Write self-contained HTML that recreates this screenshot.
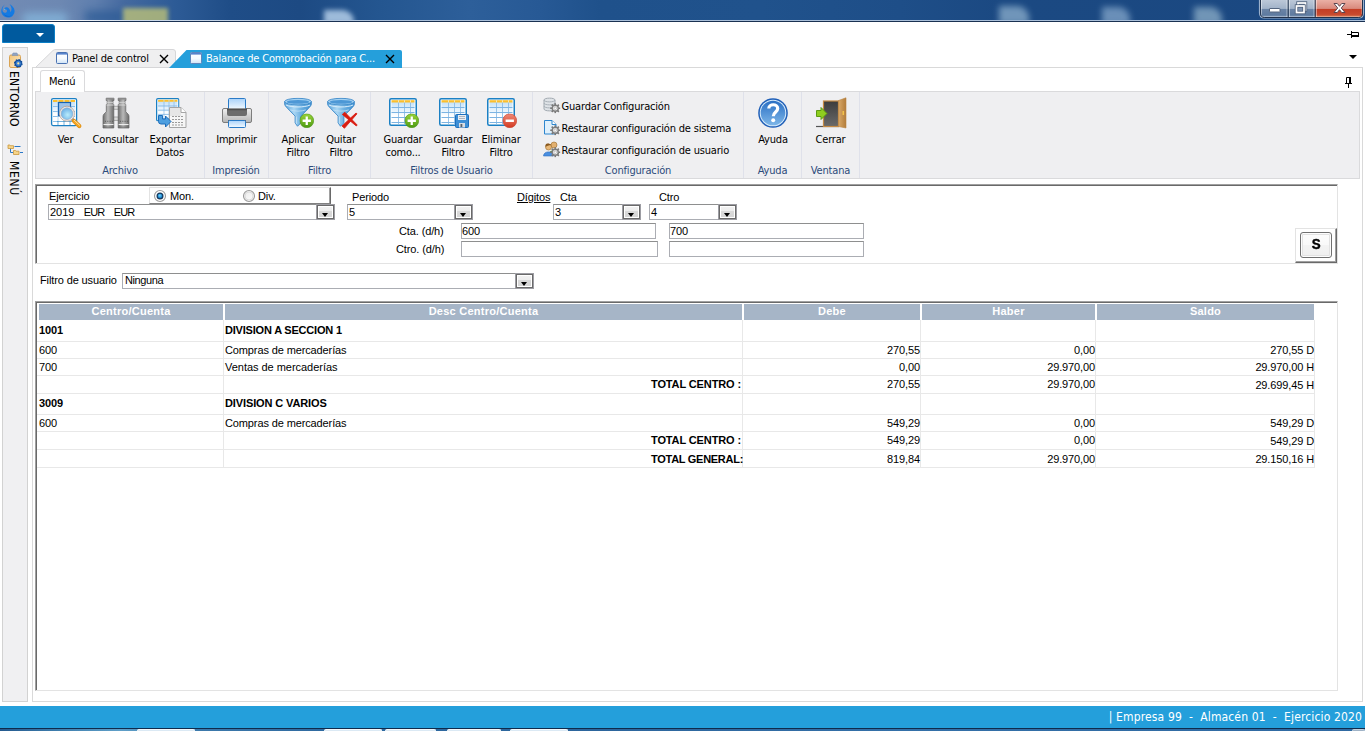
<!DOCTYPE html>
<html lang="es">
<head>
<meta charset="utf-8">
<title>Balance de Comprobación para Centros</title>
<style>
*{box-sizing:border-box;margin:0;padding:0}
html,body{width:1365px;height:731px;overflow:hidden;background:#fff}
body{position:relative;font-family:"Liberation Sans",sans-serif;font-size:11px;color:#000}
.abs{position:absolute}
.t{position:absolute;white-space:nowrap;line-height:13px}
.tah{font-family:"DejaVu Sans Condensed","Liberation Sans",sans-serif;font-size:11px;letter-spacing:-0.18px}
/* title bar */
#titlebar{left:0;top:0;width:1365px;height:20px;background:linear-gradient(90deg,#728bb4 0,#6d88b2 60px,#5f7fae 95px,#44699f 125px,#2d5b96 175px,#1f4d87 230px,#1d4a83 300px,#245690 380px,#2d5f9a 470px,#275995 540px,#1f518b 600px,#20528c 760px,#1e4e88 900px,#1b4982 1000px,#1b4881 1365px);overflow:hidden}
#titleline{left:0;top:21px;width:1365px;height:1px;background:#1a3152}
#titleline2{left:0;top:20px;width:1365px;height:1px;background:linear-gradient(90deg,#cfdcec 0,#ffffff 60px,#cfdcec 130px,#a9bfd9 400px,#a9bfd9 1365px)}
.blob{position:absolute;filter:blur(3px);opacity:.8}
/* main */
#bluebtn{left:2px;top:24px;width:53px;height:19px;background:#005a9e;border:1px solid #0c7fc6;border-radius:3px 3px 0 0}
#sidebar{left:2px;top:47px;width:26px;height:655px;background:#f0f0f2;border:1px solid #d2d2d2}
#content{left:32px;top:67px;width:1331px;height:635px;background:#fff;border:1px solid #d9d9d9}
#ribbon{left:35px;top:91px;width:1325px;height:88px;background:#efeff1;border:1px solid #dadadc}
.gsep{position:absolute;top:92px;width:1px;height:86px;background:#dfe1ea}
.glabel{color:#2b4a7a}
#status{left:0;top:706px;width:1365px;height:22px;background:#249fdb}
#taskstrip{left:0;top:728px;width:1365px;height:3px;background:linear-gradient(90deg,#24598e 0,#3f7fae 60px,#5f9fc8 120px,#3c79ab 200px,#2f6aa0 320px,#2c659c 600px,#3470a8 900px,#2f69a1 1365px);overflow:hidden}
#taskstrip i{position:absolute;top:1px;height:3px;background:#dbe9f4;border:1px solid #f4f9fc;border-bottom:0;border-radius:2px 2px 0 0}
/* form */
#panel{left:35px;top:184px;width:1303px;height:80px;border:1px solid;border-color:#a0a0a0 #e3e3e3 #e3e3e3 #a0a0a0;box-shadow:inset 1px 1px 0 #696969;background:#fff}
.combo{position:absolute;height:16px;border:1px solid #abadb3;border-top-color:#8e8f8f;background:#fff}
.combo .dd{position:absolute;right:0;top:0;width:17px;height:14px;border:1px solid #6a6a6a;background:#fff;box-shadow:0 0 0 1px #9d9da3}
.combo .dd:before{content:"";position:absolute;left:1px;top:1px;width:13px;height:10px;background:linear-gradient(#f1f1f1 0,#ededed 40%,#dadada 41%,#d6d6d6 100%)}
.combo .dd:after{content:"";position:absolute;left:4px;top:7px;border:3.5px solid transparent;border-top:4px solid #000;border-bottom:0}
.combo span{position:absolute;left:1px;top:1px;line-height:13px;white-space:nowrap}
.inp{position:absolute;height:16px;border:1px solid #abadb3;border-top-color:#8e8f8f;background:#fff;line-height:13px;padding-left:0;padding-top:1px}
/* grid */
#grid{left:35px;top:301px;width:1303px;height:390px;border:1px solid;border-color:#a0a0a0 #e3e3e3 #e3e3e3 #a0a0a0;box-shadow:inset 1px 1px 0 #696969;background:#fff}
.hd{position:absolute;top:304px;height:16px;background:#a6b5c7;color:#fff;font-weight:bold;text-align:center;line-height:15px;font-size:11px;letter-spacing:.25px}
.hl{position:absolute;left:37px;width:1278px;height:1px;background:#e8e8e8}
.vl{position:absolute;top:320px;width:1px;height:147px;background:#e8e8e8}
.c{position:absolute;white-space:nowrap;line-height:13px}
.ms{letter-spacing:-.12px}
.r{text-align:right}
.b{font-weight:bold}
</style>
</head>
<body>
<div id="titlebar" class="abs">
  <div class="blob" style="left:22px;top:13px;width:46px;height:12px;background:#86b8de;border-radius:8px;filter:blur(4px)"></div>
  <div class="blob" style="left:85px;top:11px;width:40px;height:12px;background:#2a5994;filter:blur(5px)"></div>
  <div class="blob" style="left:123px;top:8px;width:45px;height:16px;background:#bcc178;filter:blur(2px)"></div>
  <div class="blob" style="left:324px;top:10px;width:30px;height:14px;background:#bdd6ef;border-radius:0 12px 0 0;filter:blur(2.500px)"></div>
  <div class="blob" style="left:999px;top:6px;width:30px;height:18px;background:#86a9c8;border-radius:0 12px 0 0;filter:blur(3px)"></div>
  <div class="blob" style="left:1102px;top:7px;width:28px;height:18px;background:#7ea1c6;border-radius:0 12px 0 0;filter:blur(3px)"></div>
  <div class="blob" style="left:1194px;top:7px;width:28px;height:18px;background:#87a9c4;border-radius:0 12px 0 0;filter:blur(3px)"></div>
</div>
<div id="titleline2" class="abs"></div>
<div id="titleline" class="abs"></div>
<div id="bluebtn" class="abs"></div>
<div id="sidebar" class="abs"></div>
<div id="content" class="abs"></div>
<div id="ribbon" class="abs"></div>

<!-- window caption buttons -->
<svg class="abs" style="left:1258px;top:0" width="107" height="20" viewBox="0 0 107 20">
  <defs>
    <linearGradient id="cbG" x1="0" y1="0" x2="0" y2="1"><stop offset="0" stop-color="#bcc8d8"/><stop offset=".47" stop-color="#a2b3c9"/><stop offset=".5" stop-color="#6b84a6"/><stop offset=".82" stop-color="#5f7ba0"/><stop offset="1" stop-color="#8aa2c0"/></linearGradient>
    <linearGradient id="cbR" x1="0" y1="0" x2="0" y2="1"><stop offset="0" stop-color="#eab0a5"/><stop offset=".47" stop-color="#d98a7d"/><stop offset=".5" stop-color="#c33d25"/><stop offset=".8" stop-color="#c8492e"/><stop offset="1" stop-color="#dc9068"/></linearGradient>
    <clipPath id="cbClip"><path d="M2 -1H105V13Q105 17.500 100.500 17.500H6.500Q2 17.500 2 13Z"/></clipPath>
  </defs>
  <path d="M1.500 -1V13Q1.500 18 6.500 18H100.500Q105.500 18 105.500 13V-1" fill="none" stroke="#c5d3e4" stroke-width="1.200" opacity=".75"/>
  <g clip-path="url(#cbClip)">
    <rect x="2" y="0" width="28" height="18" fill="url(#cbG)"/>
    <rect x="30" y="0" width="27" height="18" fill="url(#cbG)"/>
    <rect x="57" y="0" width="48" height="18" fill="url(#cbR)"/>
    <path d="M3.500 0V16.500M29 0V17M31.500 0V17M56 0V17M58.500 0V17M104 0V14" stroke="#fff" stroke-width="1" opacity=".45"/>
    <path d="M3 16.500H104" stroke="#fff" stroke-width="1" opacity=".3"/>
    <path d="M30.200 0V18M57.200 0V18" stroke="#25364f" stroke-width="1"/>
  </g>
  <path d="M2.500 -1V13Q2.500 17.500 6.500 17.500H100.500Q104.500 17.500 104.500 13V-1" fill="none" stroke="#22324c" stroke-width="1"/>
  <rect x="11.500" y="8.500" width="10.500" height="3.500" rx=".5" fill="#fff" stroke="#54657f" stroke-width="1"/>
  <g fill="none">
    <rect x="40" y="3" width="7.500" height="7" stroke="#50627d" stroke-width="3.400"/>
    <rect x="40" y="3" width="7.500" height="7" stroke="#fff" stroke-width="1.700"/>
    <rect x="38.500" y="6" width="7.500" height="6.500" fill="#8095b3" stroke="#50627d" stroke-width="3.400"/>
    <rect x="38.500" y="6" width="7.500" height="6.500" stroke="#fff" stroke-width="1.700"/>
  </g>
  <path d="M76 3.500H79.300L81.500 6.300L83.700 3.500H87L83.300 8L87 12.500H83.700L81.500 9.700L79.300 12.500H76L79.700 8Z" fill="#fff" stroke="#5a4650" stroke-width="1" stroke-linejoin="round"/>
</svg>
<!-- app logo -->
<svg class="abs" style="left:0;top:0" width="18" height="20" viewBox="0 0 18 20">
  <path d="M4.800 4.600 C1.500 6.800 .3 11.500 2.300 14.500 C4.500 17.900 9.500 18.600 12.500 15.900 C15.800 13 15.500 7.800 9.600 4.100 C12 7.500 12.200 10 10.300 12.200 C10.300 9 8 6.700 5.500 7.500 C4.500 7.900 4.100 8.700 4.400 9.500 C6 9 7.400 10 6.900 11.600 C6.400 13.100 4 13.300 3 11.800 C1.900 10 2.600 6.800 4.800 4.600Z" fill="#157ae2"/>
  <path d="M3 13 C5 16.500 10 17 12.500 14.500 C10 17.500 5 17.500 3 13Z" fill="#0d63c8"/>
  <circle cx="4.600" cy="9.300" r=".6" fill="#5cc0f4"/>
</svg>
<!-- blue app button arrow -->
<div class="abs" style="left:36px;top:33px;border:4px solid transparent;border-top:4px solid #fff;border-bottom:0"></div>
<!-- top-right glyphs -->
<svg class="abs" style="left:1346px;top:30px" width="14" height="9" viewBox="0 0 14 9"><path d="M1 4.5H5 M5.5 1V8 M5.5 2.5H12.5V6.5H5.5" fill="none" stroke="#000" stroke-width="1"/><rect x="5" y="5" width="8" height="2" fill="#000"/></svg>
<div class="abs" style="left:1349px;top:55px;border:4px solid transparent;border-top:4px solid #000;border-bottom:0"></div>
<svg class="abs" style="left:1344px;top:76px" width="9" height="13" viewBox="0 0 9 13"><path d="M2.5 1.5H6.5V7.5H2.5Z M1 7.5H8 M4.5 7.5V12" fill="none" stroke="#000" stroke-width="1"/><rect x="5" y="1" width="2" height="7" fill="#000"/></svg>
<!-- document tabs -->
<svg class="abs" style="left:32px;top:48px" width="380" height="21" viewBox="0 0 380 21">
  <defs><linearGradient id="gWin" x1="0" y1="0" x2="0" y2="1"><stop offset="0" stop-color="#ffffff"/><stop offset=".55" stop-color="#f6fafe"/><stop offset="1" stop-color="#cfe3f6"/></linearGradient></defs>
  <path d="M3.5 19.5 L21 2.5 Q22 1.5 24 1.5 L141 1.5 Q143.5 1.5 143.5 4 L143.5 19.5 Z" fill="#efeff0" stroke="#d6d6d8" stroke-width="1"/>
  <path d="M137 20 L154.5 2 L368 2 Q370 2 370 4 L370 20 Z" fill="#259fdb"/>
  <g>
    <rect x="24.500" y="4.500" width="11" height="11" rx="1" fill="url(#gWin)" stroke="#4a72b2"/>
    <rect x="25" y="5" width="10" height="1.600" fill="#5783cc"/>
    <rect x="158.500" y="4.500" width="11" height="11" rx="1" fill="url(#gWin)" stroke="#5f86bc"/>
    <rect x="159" y="5" width="10" height="1.600" fill="#5783cc"/>
  </g>
  <path d="M128 7 L136 15 M136 7 L128 15" stroke="#000" stroke-width="1.4"/>
  <path d="M354 7 L362 15 M362 7 L354 15" stroke="#000" stroke-width="1.4"/>
</svg>
<div class="t tah" style="left:72px;top:52px">Panel de control</div>
<div class="t tah" style="left:206px;top:52px;color:#fff">Balance de Comprobación para C...</div>
<!-- menu tab -->
<div class="abs" style="left:40px;top:70px;width:45px;height:22px;background:#fff;border:1px solid #dadadc;border-bottom:0;border-radius:3px 3px 0 0;z-index:3"></div>
<div class="t tah" style="left:49px;top:75px;z-index:4">Menú</div>
<!-- sidebar icons -->
<svg class="abs" style="left:8px;top:52px" width="17" height="17" viewBox="0 0 17 17">
  <defs><linearGradient id="gClip" x1="0" y1="0" x2="1" y2="1"><stop offset="0" stop-color="#f3c476"/><stop offset="1" stop-color="#fdeccb"/></linearGradient></defs>
  <rect x="1.500" y="3" width="11" height="12.500" rx="1.500" fill="url(#gClip)" stroke="#d9a455" stroke-width="1"/>
  <path d="M4 3.500 L5 1H9L10 3.500Z" fill="#8fa3c4" stroke="#7f93b4" stroke-width=".6"/>
  <circle cx="10.300" cy="11.400" r="3.600" fill="#2a6bc0" stroke="#0d4a98" stroke-width="1.500" stroke-dasharray="1.500 1.300"/>
  <circle cx="10.300" cy="11.400" r="3.200" fill="#3b7fd0" stroke="#0d4a98" stroke-width="1"/>
  <circle cx="10.300" cy="11.400" r="1.100" fill="#f6e6a0"/>
</svg>
<svg class="abs" style="left:7px;top:143px" width="18" height="14" viewBox="0 0 18 14">
  <path d="M3.500 5V9.500H6.500M7.500 3.500H13.500M13 9.500H16" fill="none" stroke="#2a78c8" stroke-width="1"/>
  <path d="M1 2 H3 L3.500 2.700 H6.500 V5.500 H1Z" fill="#f6d48a" stroke="#c9983e" stroke-width=".8"/>
  <path d="M6.500 7.500 H8.500 L9 8.200 H12 V11.500 H6.500Z" fill="#f6d48a" stroke="#c9983e" stroke-width=".8"/>
</svg>
<!-- sidebar labels -->
<div class="t tah" style="left:20px;top:71px;transform-origin:0 0;transform:rotate(90deg);font-size:12px;letter-spacing:.25px">ENTORNO</div>
<div class="t tah" style="left:20px;top:161px;transform-origin:0 0;transform:rotate(90deg);font-size:12px;letter-spacing:.7px">MENÚ</div>

<!-- ===== ribbon icons (symbols) ===== -->
<svg width="0" height="0" style="position:absolute">
<defs>
  <linearGradient id="gCell" x1="0" y1="0" x2="0" y2="1"><stop offset="0" stop-color="#c4e2f9"/><stop offset="1" stop-color="#ffffff"/></linearGradient>
  <linearGradient id="gFun" x1="0" y1="0" x2="1" y2="0"><stop offset="0" stop-color="#5fa6dc"/><stop offset=".35" stop-color="#a9d6f3"/><stop offset=".6" stop-color="#6fb2e2"/><stop offset="1" stop-color="#3f8fd0"/></linearGradient>
  <linearGradient id="gGreen" x1="0" y1="0" x2="0" y2="1"><stop offset="0" stop-color="#9bd43a"/><stop offset="1" stop-color="#4c9a12"/></linearGradient>
  <linearGradient id="gRed" x1="0" y1="0" x2="0" y2="1"><stop offset="0" stop-color="#f08a78"/><stop offset="1" stop-color="#d23a22"/></linearGradient>
  <linearGradient id="gBino" x1="0" y1="0" x2="1" y2="0"><stop offset="0" stop-color="#6e6e6e"/><stop offset=".45" stop-color="#b9b9b9"/><stop offset="1" stop-color="#6a6a6a"/></linearGradient>
  <linearGradient id="gHelp" x1="0" y1="0" x2="0" y2="1"><stop offset="0" stop-color="#2a6fc4"/><stop offset="1" stop-color="#7db6e8"/></linearGradient>
  <linearGradient id="gDoor" x1="0" y1="0" x2="0" y2="1"><stop offset="0" stop-color="#3c3c3c"/><stop offset="1" stop-color="#6a6a6a"/></linearGradient>
  <linearGradient id="gWood" x1="0" y1="0" x2="1" y2="0"><stop offset="0" stop-color="#d9a867"/><stop offset="1" stop-color="#b27c3a"/></linearGradient>
  <linearGradient id="gPaper" x1="0" y1="0" x2="0" y2="1"><stop offset="0" stop-color="#a9d2fa"/><stop offset="1" stop-color="#f4faff"/></linearGradient>
  <linearGradient id="gPrn" x1="0" y1="0" x2="0" y2="1"><stop offset="0" stop-color="#f1f1f1"/><stop offset="1" stop-color="#b5b5b5"/></linearGradient>
  <radialGradient id="gLens" cx=".55" cy=".6" r=".6"><stop offset="0" stop-color="#b9ecfb"/><stop offset="1" stop-color="#6aaee6"/></radialGradient>
  <symbol id="tbl" viewBox="0 0 28 28">
    <rect x=".75" y=".75" width="26.500" height="26.500" rx="1.5" fill="#fff" stroke="#1b80c4" stroke-width="1.5"/>
    <rect x="2.500" y="4" width="23" height="14" fill="url(#gCell)"/>
    <rect x="2.500" y="2.200" width="23" height="2.300" fill="#fbbf2e"/>
    <path d="M2.500 9.500H25.500M2.500 14.500H25.500M2.500 19.500H25.500M2.500 24.500H25.500" stroke="#7db4e2" stroke-width="1"/>
    <path d="M9.500 2.500V26M15.500 2.500V26M21.500 2.500V26" stroke="#7db4e2" stroke-width="1" opacity=".75"/>
    <path d="M9.500 2.200V4.500M15.500 2.200V4.500M21.500 2.200V4.500" stroke="#fde9ae" stroke-width="1"/>
  </symbol>
  <symbol id="funnel" viewBox="0 0 30 30">
    <path d="M1.200 4 V6.500 C1.200 8 2.800 9.500 4 10.800 L12 19 V26 L14.500 29.500 L18 26 V19 L26 10.800 C27.200 9.500 28.800 8 28.800 6.500 V4Z" fill="url(#gFun)" stroke="#3a87c8" stroke-width=".9"/>
    <ellipse cx="15" cy="4" rx="13.800" ry="3.400" fill="#a5d2f2" stroke="#3a87c8" stroke-width=".9"/>
    <ellipse cx="15" cy="4.300" rx="11.600" ry="1.900" fill="#4d98d6"/>
    <path d="M2.500 7.500 C8 10.200 22 10.200 27.500 7.500" fill="none" stroke="#dcEEfb" stroke-width="1"/>
    <path d="M7 12.500 C11 14.300 19 14.300 23 12.500" fill="none" stroke="#c6e3f7" stroke-width=".9" opacity=".9"/>
    <path d="M13.300 19.500V27" stroke="#c6e3f7" stroke-width="1" opacity=".9"/>
  </symbol>
  <symbol id="plus" viewBox="0 0 14 14">
    <circle cx="7" cy="7" r="6.700" fill="url(#gGreen)" stroke="#4a9315" stroke-width=".6"/>
    <path d="M7 3V11M3 7H11" stroke="#fff" stroke-width="2.200"/>
  </symbol>
  <symbol id="minus" viewBox="0 0 14 14">
    <circle cx="7" cy="7" r="6.700" fill="url(#gRed)" stroke="#c9412c" stroke-width=".6"/>
    <path d="M3 7H11" stroke="#fff" stroke-width="2.400"/>
  </symbol>
  <symbol id="gear" viewBox="0 0 10 10">
    <path d="M5 .2V2.200M5 7.800V9.800M.2 5H2.200M7.800 5H9.800M1.600 1.600L3 3M7 7L8.400 8.400M8.400 1.600L7 3M3 7L1.600 8.400" stroke="#777" stroke-width="1.500"/>
    <circle cx="5" cy="5" r="2.900" fill="#ededed" stroke="#7d7d7d" stroke-width="1.300"/>
    <circle cx="5" cy="5" r="1.200" fill="#fff" stroke="#9a9a9a" stroke-width=".5"/>
  </symbol>
</defs>
</svg>
<!-- group separators -->
<div class="gsep" style="left:204px"></div><div class="gsep" style="left:268px"></div><div class="gsep" style="left:370px"></div>
<div class="gsep" style="left:532px"></div><div class="gsep" style="left:743px"></div><div class="gsep" style="left:801px"></div><div class="gsep" style="left:859px"></div>
<!-- Ver -->
<svg class="abs" style="left:50px;top:97px" width="33" height="33" viewBox="0 0 33 33">
  <rect x="1.600" y="1.600" width="25" height="27" rx="1.500" fill="#fff" stroke="#1b80c4" stroke-width="1.300"/>
  <rect x="3" y="4.500" width="22" height="13" fill="url(#gCell)"/>
  <rect x="3" y="3" width="22" height="2" fill="#fbbf2e"/>
  <path d="M3 9.500H25M3 14.500H25M3 19.500H25M3 24.500H25" stroke="#8fc0e8" stroke-width="1"/>
  <path d="M8 3V28M14 3V28M20 3V28" stroke="#9ccaee" stroke-width="1" opacity=".7"/>
  <path d="M8 3V5M14 3V5M20 3V5" stroke="#fde9ae" stroke-width="1"/>
  <rect x="8.500" y="5.500" width="12" height="13" fill="#9cc3e8" stroke="#1563b4" stroke-width="1.200"/>
  <rect x="7.500" y="24" width="15" height="4" fill="#fff"/>
  <path d="M8 24V28M14 24V28M20 24V28" stroke="#1b80c4" stroke-width="1" opacity=".6"/>
  <path d="M7 24.500H25" stroke="#1b80c4" stroke-width="1" opacity=".6"/>
  <path d="M22 22 L24.500 24.500" stroke="#9b9b9b" stroke-width="3.200"/>
  <path d="M24 24 L29.300 29" stroke="#d98a10" stroke-width="4.200" stroke-linecap="round"/>
  <path d="M24 24 L29.300 29" stroke="#f6a622" stroke-width="3" stroke-linecap="round"/>
  <path d="M24.300 23.300 L29.600 28.300" stroke="#fbe3b4" stroke-width=".9" stroke-linecap="round"/>
  <circle cx="17" cy="16.700" r="7.500" fill="#f5f2ef" stroke="#a99486" stroke-width=".7"/>
  <circle cx="17" cy="16.700" r="5.900" fill="url(#gLens)" stroke="#8ea6c0" stroke-width=".6"/>
</svg>
<!-- Consultar -->
<svg class="abs" style="left:100px;top:97px" width="33" height="33" viewBox="0 0 33 33">
  <rect x="13.500" y="9.200" width="5.500" height="3" fill="#dcdcdc" stroke="#8d8d8d" stroke-width=".7"/>
  <rect x="13.500" y="20" width="5.500" height="3.300" fill="#dcdcdc" stroke="#8d8d8d" stroke-width=".7"/>
  <path d="M6.200 1.200H14V3.500H13V7.500H13.800V31H3V19.500Q3 18 4 17L6.300 14.800V7.500H7.200V3.500H6.200Z" fill="url(#gBino)" stroke="#646464" stroke-width=".7"/>
  <path d="M18.200 1.200H26V3.500H25V7.500H25.800V14.800L28 17Q29 18 29 19.500V31H18.200V7.500H19.200V3.500H18.200Z" fill="url(#gBino)" stroke="#646464" stroke-width=".7"/>
  <path d="M6.200 1.800H14M18.200 1.800H26" stroke="#8a8a8a" stroke-width="1.400"/>
  <path d="M7.200 5.500H13M19.200 5.500H25" stroke="#d5d5d5" stroke-width="1.600" opacity=".8"/>
  <path d="M6.500 8H13.600M18.500 8H25.600" stroke="#dedede" stroke-width="1" opacity=".9"/>
  <path d="M3.500 27.500H13.500M18.600 27.500H28.600" stroke="#ececec" stroke-width="1.100"/>
  <path d="M5 24.300H13M20 24.300H28" stroke="#5a5a5a" stroke-width="1" stroke-dasharray="1 1.300"/>
  <path d="M3.500 30H13.500M18.600 30H28.600" stroke="#5e5e5e" stroke-width="1" opacity=".6"/>
</svg>
<!-- Exportar -->
<svg class="abs" style="left:155px;top:97px" width="33" height="33" viewBox="0 0 33 33">
  <use href="#tbl" x="1" y="1" width="23.500" height="23.500"/>
  <path d="M14.500 10.500H26L31 15.500V30.500H14.500Z" fill="#f6f6f6" stroke="#a5a5a5" stroke-width="1"/>
  <path d="M15 11H26V19H15Z" fill="#e2e2e2" opacity=".8"/>
  <path d="M26 10.500V15.500H31" fill="#fff" stroke="#a5a5a5" stroke-width="1"/>
  <path d="M17 19.500H29M17 22.500H29M17 25.500H29M17 28H29" stroke="#9a9a9a" stroke-width="1.200" stroke-dasharray="2 1"/>
  <path d="M3.500 18.500 H7.500 V22 H10.500 V19 L16 24.500 L10.500 30 V27 H6 Q3.500 27 3.500 24.500Z" fill="#4e9fe0" stroke="#1d6dba" stroke-width="1"/>
</svg>
<!-- Imprimir -->
<svg class="abs" style="left:221px;top:97px" width="33" height="33" viewBox="0 0 33 33">
  <rect x="1.500" y="11.500" width="29" height="14" rx="1.500" fill="url(#gPrn)" stroke="#7d7d7d"/>
  <rect x="7.500" y="1.500" width="17" height="11" rx="1" fill="url(#gPaper)" stroke="#2a7ac6"/>
  <path d="M6 11.500H26V17Q26 19 24 19H8Q6 19 6 17Z" fill="#6c6c6c"/>
  <path d="M6 12.500H26" stroke="#4f4f4f" stroke-width="1.500"/>
  <path d="M7 23H25V25H7Z" fill="#5c5c5c"/>
  <rect x="7.500" y="23.500" width="17" height="7" rx="1" fill="url(#gPaper)" stroke="#2a7ac6"/>
</svg>
<!-- Aplicar Filtro -->
<svg class="abs" style="left:283px;top:97px" width="33" height="33" viewBox="0 0 33 33">
  <use href="#funnel" x=".5" y=".5" width="29" height="29.500"/>
  <use href="#plus" x="16.500" y="16.500" width="14.500" height="14.500"/>
</svg>
<!-- Quitar Filtro -->
<svg class="abs" style="left:326px;top:97px" width="33" height="33" viewBox="0 0 33 33">
  <use href="#funnel" x=".5" y=".5" width="29" height="29.500"/>
  <path d="M16.300 17.400 L18.800 15.200 L31.200 28 L30.300 29Z" fill="#d91c10" stroke="#d91c10" stroke-width=".8" stroke-linejoin="round"/><path d="M16 29 L18.400 31.300 L31 16.800 L30 16Z" fill="#d91c10" stroke="#d91c10" stroke-width=".8" stroke-linejoin="round"/>
</svg>
<!-- Guardar como -->
<svg class="abs" style="left:388px;top:97px" width="33" height="33" viewBox="0 0 33 33">
  <use href="#tbl" x="1" y="1" width="28" height="28"/>
  <use href="#plus" x="16.500" y="16.500" width="14.500" height="14.500"/>
</svg>
<!-- Guardar Filtro -->
<svg class="abs" style="left:438px;top:97px" width="33" height="33" viewBox="0 0 33 33">
  <use href="#tbl" x="1" y="1" width="28" height="28"/>
  <rect x="17.500" y="17.500" width="13" height="13" rx="1" fill="#3d8fd6" stroke="#1c6fbd"/>
  <rect x="20" y="18" width="8" height="5" fill="#e9eef3"/>
  <path d="M21 19.500H27M21 21.500H27" stroke="#9aa5b1" stroke-width=".8"/>
  <rect x="21" y="26" width="6" height="4.500" fill="#d8dde3"/>
  <rect x="22.500" y="27" width="1.800" height="3" fill="#56606b"/>
</svg>
<!-- Eliminar Filtro -->
<svg class="abs" style="left:486px;top:97px" width="33" height="33" viewBox="0 0 33 33">
  <use href="#tbl" x="1" y="1" width="28" height="28"/>
  <use href="#minus" x="16.500" y="16.500" width="14.500" height="14.500"/>
</svg>
<!-- Ayuda -->
<svg class="abs" style="left:757px;top:97px" width="33" height="33" viewBox="0 0 33 33">
  <circle cx="16" cy="16" r="14.800" fill="#1f5fb8"/>
  <circle cx="16" cy="16" r="13.300" fill="#d9ecfb"/>
  <circle cx="16" cy="16" r="12.300" fill="url(#gHelp)"/>
  <path d="M11.800 11.500 C11.800 6.500 20.700 6.500 20.700 11.500 C20.700 15 16.300 15 16.300 19.300" fill="none" stroke="#fff" stroke-width="3.200"/>
  <circle cx="16.200" cy="23.300" r="2" fill="#fff"/>
</svg>
<!-- Cerrar -->
<svg class="abs" style="left:814px;top:97px" width="34" height="33" viewBox="0 0 34 33">
  <path d="M2 29.500H25" stroke="#555" stroke-width="1.200"/>
  <rect x="9.500" y="4" width="15" height="25.500" fill="url(#gDoor)" stroke="#c48a45" stroke-width="1.200"/>
  <path d="M24.500 3.500 L32 .8 V31 L24.500 29.500Z" fill="url(#gWood)" stroke="#b98444" stroke-width=".6"/>
  <rect x="28.500" y="14" width="1.600" height="4" fill="#f3c24a"/>
  <path d="M2.500 13.500H7V10.500L13 16.500L7 22.500V19.500H2.500Z" fill="#8fce1f" stroke="#5d9b12" stroke-width="1"/>
</svg>
<!-- small config icons -->
<svg class="abs" style="left:543px;top:97px" width="18" height="17" viewBox="0 0 18 17">
  <path d="M1 3 C1 .5 12 .5 12 3 V12 C12 14.500 1 14.500 1 12Z" fill="#dfe3e7" stroke="#9aa1a9" stroke-width=".9"/>
  <path d="M1 3 C1 5.500 12 5.500 12 3 M1 6 C1 8.500 12 8.500 12 6 M1 9 C1 11.500 12 11.500 12 9" fill="none" stroke="#a4abb3" stroke-width=".9"/>
  <use href="#gear" x="7" y="6" width="10.500" height="10.500"/>
</svg>
<svg class="abs" style="left:543px;top:119px" width="18" height="17" viewBox="0 0 18 17">
  <path d="M1.500 1.500H9L13 5.500V15H1.500Z" fill="#dff0fc" stroke="#2d86cf" stroke-width="1"/>
  <path d="M9 1.500V5.500H13" fill="#fff" stroke="#2d86cf" stroke-width="1"/>
  <use href="#gear" x="7" y="6" width="10.500" height="10.500"/>
</svg>
<svg class="abs" style="left:543px;top:141px" width="18" height="17" viewBox="0 0 18 17">
  <circle cx="11" cy="4" r="3" fill="#e2b070" stroke="#9a6a2a" stroke-width=".6"/>
  <path d="M6 13 C6 8 16 8 16 13Z" fill="#5a9a3a"/>
  <circle cx="5.500" cy="6" r="3" fill="#e8b878" stroke="#9a6a2a" stroke-width=".6"/>
  <path d="M6 2.800 C3 2 2 4 2.700 6 C3.500 4.500 6 4.500 8 4 C7.500 3 7 3 6 2.800Z" fill="#8a5a20"/>
  <path d="M.5 15 C.5 9.500 10.500 9.500 10.500 15Z" fill="#4a8fe0" stroke="#2d6fc0" stroke-width=".6"/>
  <use href="#gear" x="7" y="6" width="10.500" height="10.500"/>
</svg>
<div class="t tah" style="left:5.5px;top:133px;width:120px;text-align:center">Ver</div>
<div class="t tah" style="left:55.5px;top:133px;width:120px;text-align:center">Consultar</div>
<div class="t tah" style="left:110px;top:133px;width:120px;text-align:center">Exportar</div>
<div class="t tah" style="left:110px;top:146px;width:120px;text-align:center">Datos</div>
<div class="t tah" style="left:176.5px;top:133px;width:120px;text-align:center">Imprimir</div>
<div class="t tah" style="left:238px;top:133px;width:120px;text-align:center">Aplicar</div>
<div class="t tah" style="left:238px;top:146px;width:120px;text-align:center">Filtro</div>
<div class="t tah" style="left:281px;top:133px;width:120px;text-align:center">Quitar</div>
<div class="t tah" style="left:281px;top:146px;width:120px;text-align:center">Filtro</div>
<div class="t tah" style="left:343px;top:133px;width:120px;text-align:center">Guardar</div>
<div class="t tah" style="left:343px;top:146px;width:120px;text-align:center">como...</div>
<div class="t tah" style="left:393px;top:133px;width:120px;text-align:center">Guardar</div>
<div class="t tah" style="left:393px;top:146px;width:120px;text-align:center">Filtro</div>
<div class="t tah" style="left:441px;top:133px;width:120px;text-align:center">Eliminar</div>
<div class="t tah" style="left:441px;top:146px;width:120px;text-align:center">Filtro</div>
<div class="t tah" style="left:713px;top:133px;width:120px;text-align:center">Ayuda</div>
<div class="t tah" style="left:770.5px;top:133px;width:120px;text-align:center">Cerrar</div>
<div class="t tah glabel" style="left:60px;top:164px;width:120px;text-align:center">Archivo</div>
<div class="t tah glabel" style="left:176px;top:164px;width:120px;text-align:center">Impresión</div>
<div class="t tah glabel" style="left:259.5px;top:164px;width:120px;text-align:center">Filtro</div>
<div class="t tah glabel" style="left:391.5px;top:164px;width:120px;text-align:center">Filtros de Usuario</div>
<div class="t tah glabel" style="left:578px;top:164px;width:120px;text-align:center">Configuración</div>
<div class="t tah glabel" style="left:712.5px;top:164px;width:120px;text-align:center">Ayuda</div>
<div class="t tah glabel" style="left:770.5px;top:164px;width:120px;text-align:center">Ventana</div>
<div class="t tah" style="left:561.5px;top:100px">Guardar Configuración</div>
<div class="t tah" style="left:561.5px;top:122px">Restaurar configuración de sistema</div>
<div class="t tah" style="left:561.5px;top:144px">Restaurar configuración de usuario</div>
<div id="panel" class="abs"></div>
<div id="grid" class="abs"></div>

<!-- ===== form ===== -->
<div class="t ms" style="left:49px;top:190px">Ejercicio</div>
<div class="abs" style="left:149px;top:187px;width:182px;height:17px;border:1px solid;border-color:#e3e3e3 #696969 #808080 #e3e3e3;box-shadow:inset -1px 0 0 #a0a0a0;background:#fff"></div>
<svg class="abs" style="left:153px;top:189px" width="110" height="15" viewBox="0 0 110 15">
  <defs><radialGradient id="rb" cx=".45" cy=".4" r=".6"><stop offset="0" stop-color="#7fd6f6"/><stop offset=".7" stop-color="#1f8fd6"/><stop offset="1" stop-color="#1672b8"/></radialGradient>
  <linearGradient id="rbg" x1="0" y1="0" x2="1" y2="1"><stop offset="0" stop-color="#e9e9e9"/><stop offset="1" stop-color="#ffffff"/></linearGradient></defs>
  <circle cx="7" cy="7" r="5.500" fill="#fff" stroke="#9a9a9a" stroke-width="1.100"/>
  <circle cx="7" cy="7" r="3.500" fill="#16385c"/>
  <circle cx="7" cy="7" r="2.300" fill="url(#rb)"/>
  <circle cx="96" cy="7" r="5.500" fill="url(#rbg)" stroke="#9a9a9a" stroke-width="1.100"/>
  <circle cx="96" cy="7" r="4" fill="none" stroke="#dcdcdc" stroke-width="1"/>
</svg>
<div class="t ms" style="left:170px;top:190px">Mon.</div>
<div class="t ms" style="left:258px;top:190px">Div.</div>
<div class="combo" style="left:48px;top:204px;width:287px"><span>2019&nbsp;&nbsp; <b style="font-weight:normal;letter-spacing:-.8px">EUR</b>&nbsp;&nbsp; <b style="font-weight:normal;letter-spacing:-.8px">EUR</b></span><i class="dd"></i></div>
<div class="t ms" style="left:352px;top:191px">Periodo</div>
<div class="combo" style="left:347px;top:204px;width:126px"><span>5</span><i class="dd"></i></div>
<div class="t ms" style="left:517px;top:191px;text-decoration:underline">Dígitos</div>
<div class="t ms" style="left:560px;top:191px">Cta</div>
<div class="combo" style="left:553px;top:204px;width:88px"><span>3</span><i class="dd"></i></div>
<div class="t ms" style="left:659px;top:191px">Ctro</div>
<div class="combo" style="left:649px;top:204px;width:88px"><span>4</span><i class="dd"></i></div>
<div class="t ms" style="left:399px;top:225px">Cta. (d/h)</div>
<div class="t ms" style="left:396px;top:243px">Ctro. (d/h)</div>
<div class="inp ms" style="left:461px;top:223px;width:195px">600</div>
<div class="inp ms" style="left:669px;top:223px;width:195px">700</div>
<div class="inp ms" style="left:461px;top:241px;width:197px"></div>
<div class="inp ms" style="left:669px;top:241px;width:195px"></div>
<!-- S button -->
<div class="abs" style="left:1295px;top:228px;width:42px;height:35px;border:1px solid;border-color:#e3e3e3 #696969 #696969 #e3e3e3;box-shadow:inset -1px -1px 0 #a0a0a0;background:#fff"></div>
<div class="abs" style="left:1300px;top:232px;width:32px;height:26px;border:1px solid #707070;border-radius:3px;background:linear-gradient(#fdfdfd,#f9f9f9 48%,#f3f3f3 52%,#efefef);box-shadow:inset 0 0 0 1px #fdfdfd,inset 0 0 0 2px #e2e2e2;text-align:center;font-weight:bold;font-size:15.5px;line-height:22px"><span style="display:inline-block;transform:scaleX(.86);-webkit-text-stroke:.45px #000">S</span></div>
<!-- user filter -->
<div class="t ms" style="left:40px;top:274px">Filtro de usuario</div>
<div class="combo" style="left:122px;top:273px;width:412px"><span style="left:2px;top:0;letter-spacing:-.4px">Ninguna</span><i class="dd"></i></div>
<!-- ===== grid ===== -->
<div class="hd" style="left:39px;width:184px">Centro/Cuenta</div>
<div class="hd" style="left:225px;width:517px">Desc Centro/Cuenta</div>
<div class="hd" style="left:744px;width:176px">Debe</div>
<div class="hd" style="left:922px;width:173px">Haber</div>
<div class="hd" style="left:1097px;width:217px">Saldo</div>
<div class="hl" style="top:341px"></div>
<div class="hl" style="top:358px"></div>
<div class="hl" style="top:375px"></div>
<div class="hl" style="top:393px"></div>
<div class="hl" style="top:414px"></div>
<div class="hl" style="top:431px"></div>
<div class="hl" style="top:449px"></div>
<div class="hl" style="top:467px"></div>
<div class="vl" style="left:223px"></div>
<div class="vl" style="left:742px"></div>
<div class="vl" style="left:920px"></div>
<div class="vl" style="left:1095px"></div>
<div class="vl" style="left:1314px"></div>
<div class="c ms b" style="left:39px;top:324px">1001</div>
<div class="c ms b" style="left:225px;top:324px;letter-spacing:-.2px">DIVISION A SECCION 1</div>
<div class="c ms" style="left:39px;top:344px">600</div>
<div class="c ms" style="left:225px;top:344px">Compras de mercaderías</div>
<div class="c ms r" style="left:720px;width:200px;top:344px">270,55</div>
<div class="c ms r" style="left:895px;width:200px;top:344px">0,00</div>
<div class="c ms r" style="left:1114px;width:200px;top:344px">270,55 D</div>
<div class="c ms" style="left:39px;top:361px">700</div>
<div class="c ms" style="left:225px;top:361px;letter-spacing:-.03px">Ventas de mercaderías</div>
<div class="c ms r" style="left:720px;width:200px;top:361px">0,00</div>
<div class="c ms r" style="left:895px;width:200px;top:361px">29.970,00</div>
<div class="c ms r" style="left:1114px;width:200px;top:361px">29.970,00 H</div>
<div class="c ms b" style="left:651px;top:378px">TOTAL CENTRO :</div>
<div class="c ms r" style="left:720px;width:200px;top:378px">270,55</div>
<div class="c ms r" style="left:895px;width:200px;top:378px">29.970,00</div>
<div class="c ms r" style="left:1114px;width:200px;top:379px">29.699,45 H</div>
<div class="c ms b" style="left:39px;top:397px">3009</div>
<div class="c ms b" style="left:225px;top:397px">DIVISION C VARIOS</div>
<div class="c ms" style="left:39px;top:417px">600</div>
<div class="c ms" style="left:225px;top:417px">Compras de mercaderías</div>
<div class="c ms r" style="left:720px;width:200px;top:417px">549,29</div>
<div class="c ms r" style="left:895px;width:200px;top:417px">0,00</div>
<div class="c ms r" style="left:1114px;width:200px;top:417px">549,29 D</div>
<div class="c ms b" style="left:651px;top:434px">TOTAL CENTRO :</div>
<div class="c ms r" style="left:720px;width:200px;top:434px">549,29</div>
<div class="c ms r" style="left:895px;width:200px;top:434px">0,00</div>
<div class="c ms r" style="left:1114px;width:200px;top:435px">549,29 D</div>
<div class="c ms b" style="left:651px;top:453px;letter-spacing:-.28px">TOTAL GENERAL:</div>
<div class="c ms r" style="left:720px;width:200px;top:453px">819,84</div>
<div class="c ms r" style="left:895px;width:200px;top:453px">29.970,00</div>
<div class="c ms r" style="left:1114px;width:200px;top:453px">29.150,16 H</div>
<div id="status" class="abs"></div>
<div class="t tah" style="right:3px;top:710px;color:#fff;font-size:12px;letter-spacing:.14px;white-space:pre;line-height:14px">| Empresa 99  -  Almacén 01  -  Ejercicio 2020</div>

<div id="taskstrip" class="abs"><div class="abs" style="left:0;top:0;width:1365px;height:1px;background:#0f2b4c"></div><i style="left:137px;width:58px"></i><i style="left:324px;width:58px"></i><i style="left:385px;width:51px"></i><i style="left:447px;width:54px"></i><i style="left:510px;width:58px"></i><i style="left:1352px;width:13px;background:#9fb2c6;border-color:#c5d2de"></i></div>
</body>
</html>
